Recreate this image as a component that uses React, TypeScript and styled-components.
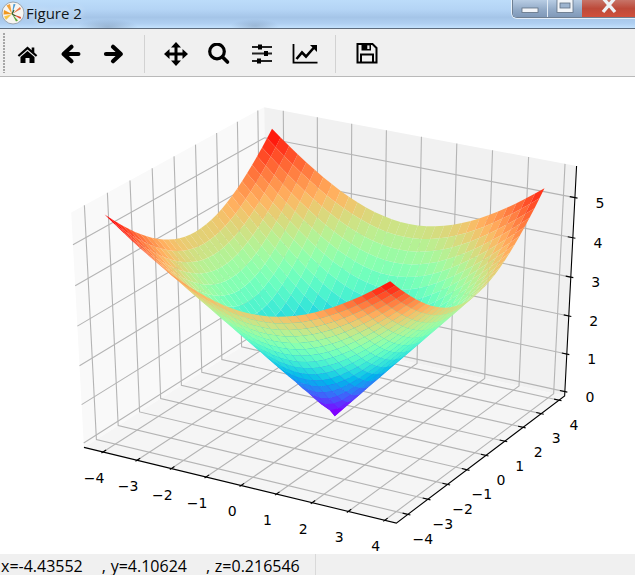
import styled, { createGlobalStyle } from "styled-components";

const GlobalStyle = createGlobalStyle`
  html, body {
    margin: 0;
    padding: 0;
    background: #fff;
  }
`;

const Window = styled.div`
  width: 635px;
  height: 575px;
  display: flex;
  flex-direction: column;
  overflow: hidden;
  font-family: "Open Sans", "Liberation Sans", sans-serif;
`;

const TitleBar = styled.div`
  height: 28px;
  flex: none;
  display: flex;
  align-items: flex-start;
  justify-content: space-between;
  background:
    radial-gradient(ellipse 30px 8px at 108px 27px, rgba(110, 135, 165, 0.45), transparent),
    radial-gradient(ellipse 24px 7px at 255px 26px, rgba(110, 135, 165, 0.4), transparent),
    linear-gradient(#bcdcfa 0%, #b4d4f5 35%, #a5c5e8 62%, #b0d0f2 85%, #c4e2fd 100%);
`;

const TitleLeft = styled.div`
  display: flex;
  align-items: center;
  gap: 1px;
  height: 25px;
  padding-left: 1px;
`;

const TitleText = styled.span`
  font-size: 15px;
  color: #101820;
  text-shadow: 0 0 6px rgba(255, 255, 255, 0.9);
`;

const WindowButtons = styled.div`
  display: flex;
  height: 17px;
  border: 1px solid #6e7f92;
  border-top: none;
  border-right: none;
  border-radius: 0 0 0 5px;
  overflow: hidden;
  box-shadow: 0 0 0 1px rgba(255, 255, 255, 0.7);
`;

const WinButton = styled.div<{ $wide?: boolean; $red?: boolean }>`
  width: ${(p) => (p.$wide ? 53 : 34)}px;
  display: flex;
  align-items: flex-start;
  justify-content: center;
  border-left: ${(p) => (p.$red ? "none" : "1px solid #e4edf6")};
  background: ${(p) =>
    p.$red
      ? "linear-gradient(#c77468, #bd4a3a 50%, #d0503c)"
      : "linear-gradient(#b8cde4, #93abc8 55%, #7f98b8)"};
  &:first-child {
    border-left: none;
  }
`;

const Toolbar = styled.div`
  height: 47px;
  flex: none;
  display: flex;
  align-items: center;
  background: #f0f0f0;
  border-top: 1px solid #5d6b7c;
  border-bottom: 1px solid #b9b9b9;
`;

const Grip = styled.div`
  width: 3px;
  height: 40px;
  margin-left: 3px;
  background-image: radial-gradient(circle at 1px 1px, #a6a6a6 1px, transparent 1px);
  background-size: 3px 3px;
`;

const ToolButton = styled.div`
  width: 43px;
  height: 100%;
  box-sizing: border-box;
  padding-top: 5px;
  display: flex;
  align-items: center;
  justify-content: center;
  flex: none;
`;

const Separator = styled.div`
  width: 1px;
  height: 38px;
  margin: 2px 9px 0;
  background: #d2d2d2;
  flex: none;
`;

const Canvas = styled.div`
  flex: 1;
  min-height: 0;
  background: #fff;
`;

const Plot = styled.svg`
  display: block;
`;

const TickLabel = styled.text`
  font-family: "DejaVu Sans", sans-serif;
  font-size: 14px;
  fill: #000;
  text-anchor: middle;
  dominant-baseline: central;
`;

const StatusBar = styled.div`
  height: 21px;
  flex: none;
  display: flex;
  background: #f0f0f0;
`;

const StatusText = styled.div`
  width: 316px;
  box-sizing: border-box;
  padding: 4px 0 0 1px;
  font-size: 16px;
  line-height: 17px;
  word-spacing: 0.6px;
  color: #000;
  white-space: pre;
  border-right: 1px solid #d9d9d9;
`;

// proyeccion igual a mplot3d: elev 30, azim -60, dist 10
const n = [0.433013, -0.75, 0.5];
const u = [0.866025, 0.5, 0];
const v = [-0.25, 0.433013, 0.866025];

const xLim = [-4.565, 4.315];
const zLim = [-0.118, 5.775];

type Pt = { x: number; y: number; w: number };

function project(dx: number, dy: number, dz: number): Pt {
  const px = (dx - xLim[0]) / (xLim[1] - xLim[0]) - 0.5;
  const py = (dy - xLim[0]) / (xLim[1] - xLim[0]) - 0.5;
  const pz = (dz - zLim[0]) / (zLim[1] - zLim[0]) - 0.5;
  const w = 10 - (n[0] * px + n[1] * py + n[2] * pz);
  const sx = (u[0] * px + u[1] * py + u[2] * pz) / w;
  const sy = (v[0] * px + v[1] * py + v[2] * pz) / w;
  return { x: 328 + 3606 * sx, y: 308 - 2682 * sy, w };
}

const pts = (list: Pt[]) => list.map((p) => `${p.x.toFixed(2)},${p.y.toFixed(2)}`).join(" ");

// mapa de color "rainbow"
function rainbow(t: number) {
  const r = Math.min(1, Math.abs(2 * t - 0.5));
  const g = Math.sin(Math.PI * t);
  const b = Math.cos((Math.PI * t) / 2);
  return `rgb(${Math.round(r * 255)},${Math.round(g * 255)},${Math.round(b * 255)})`;
}

function buildSurface() {
  const step = 0.25;
  const count = 32;
  const faces: { points: string; depth: number; avg: number }[] = [];
  const height = (a: number, b: number) => Math.sqrt(a * a + b * b);
  for (let i = 0; i < count - 1; i++) {
    for (let j = 0; j < count - 1; j++) {
      const x0 = -4 + i * step;
      const x1 = x0 + step;
      const y0 = -4 + j * step;
      const y1 = y0 + step;
      const zs = [height(x0, y0), height(x1, y0), height(x1, y1), height(x0, y1)];
      const corners = [
        project(x0, y0, zs[0]),
        project(x1, y0, zs[1]),
        project(x1, y1, zs[2]),
        project(x0, y1, zs[3]),
      ];
      faces.push({
        points: pts(corners),
        depth: corners.reduce((s, c) => s + c.w, 0) / 4,
        avg: zs.reduce((s, z) => s + z, 0) / 4,
      });
    }
  }
  const min = Math.min(...faces.map((f) => f.avg));
  const max = Math.max(...faces.map((f) => f.avg));
  return faces
    .sort((a, b) => b.depth - a.depth)
    .map((f) => ({ points: f.points, fill: rainbow((f.avg - min) / (max - min)) }));
}

const surface = buildSurface();
const ticks = [-4, -3, -2, -1, 0, 1, 2, 3, 4];
const zTicks = [0, 1, 2, 3, 4, 5];
const [xa, xb] = xLim;
const [za, zb] = zLim;
const span = xb - xa;
const tickOut = span * 0.008;
const tickIn = span * 0.016;
const label = (t: number) => (t < 0 ? `\u2212${-t}` : `${t}`);
const grid = "#b4b4b4";

function Axes() {
  return (
    <Plot width="635" height="477" viewBox="0 77 635 477">
      <polygon points={pts([project(xa, xa, za), project(xa, xb, za), project(xa, xb, zb), project(xa, xa, zb)])} fill="#f9f9f9" />
      <polygon points={pts([project(xa, xb, za), project(xb, xb, za), project(xb, xb, zb), project(xa, xb, zb)])} fill="#f1f1f1" />
      <polygon points={pts([project(xa, xa, za), project(xb, xa, za), project(xb, xb, za), project(xa, xb, za)])} fill="#f5f5f5" />

      <g stroke={grid} strokeWidth="1.1" fill="none">
        {ticks.map((t) => (
          <g key={t}>
            <polyline points={pts([project(t, xa, za), project(t, xb, za), project(t, xb, zb)])} />
            <polyline points={pts([project(xb, t, za), project(xa, t, za), project(xa, t, zb)])} />
          </g>
        ))}
        {zTicks.map((t) => (
          <polyline key={t} points={pts([project(xa, xa, t), project(xa, xb, t), project(xb, xb, t)])} />
        ))}
      </g>

      <g stroke="#000" strokeWidth="1.1" fill="none">
        <polyline points={pts([project(xa, xa, za), project(xb, xa, za), project(xb, xb, za), project(xb, xb, zb)])} />
        {ticks.map((t) => (
          <g key={t}>
            <line
              x1={project(t, xa - tickOut, za).x}
              y1={project(t, xa - tickOut, za).y}
              x2={project(t, xa + tickIn, za).x}
              y2={project(t, xa + tickIn, za).y}
            />
            <line
              x1={project(xb + tickOut, t, za).x}
              y1={project(xb + tickOut, t, za).y}
              x2={project(xb - tickIn, t, za).x}
              y2={project(xb - tickIn, t, za).y}
            />
          </g>
        ))}
        {zTicks.map((t) => (
          <line
            key={t}
            x1={project(xb + tickOut, xb, t).x}
            y1={project(xb + tickOut, xb, t).y}
            x2={project(xb - tickIn, xb, t).x}
            y2={project(xb - tickIn, xb, t).y}
          />
        ))}
      </g>

      {surface.map((f, i) => (
        <polygon key={i} points={f.points} fill={f.fill} />
      ))}

      {ticks.map((t) => {
        const p = project(t, xa, za);
        return (
          <TickLabel key={t} x={p.x - 9} y={p.y + 26}>
            {label(t)}
          </TickLabel>
        );
      })}
      {ticks.map((t) => {
        const p = project(xb, t, za);
        return (
          <TickLabel key={t} x={p.x + 15} y={p.y + 24.5}>
            {label(t)}
          </TickLabel>
        );
      })}
      {zTicks.map((t) => {
        const p = project(xb, xb, t);
        return (
          <TickLabel key={t} x={p.x + 25} y={p.y + 5}>
            {t}
          </TickLabel>
        );
      })}
    </Plot>
  );
}

function LogoIcon() {
  return (
    <svg width="24" height="24" viewBox="0 0 24 24">
      <circle cx="12" cy="12" r="11" fill="#f7f5f0" stroke="#9aa5b0" strokeWidth="1" />
      <path d="M11 13 L3 9 L2.5 13.5 Z" fill="#f0981f" />
      <path d="M11 13 L3 15.5 L5 19 Z" fill="#f7c648" />
      <path d="M11 13 L5.5 4.5 L9 3 Z" fill="#f2a23a" />
      <path d="M11 13 L12.5 3 L14.5 3.3 Z" fill="#4a9ad4" />
      <path d="M11 13 L19 6 L20 8 Z" fill="#e8784a" />
      <path d="M11 13 L15 20.5 L17 19.5 Z" fill="#5da63a" />
      <path d="M11 13 L20 16 L19.5 18 Z" fill="#d8482e" />
      <path d="M11 13 L13 9 M11 13 L14.5 15" stroke="#2d5f2a" strokeWidth="1.2" />
    </svg>
  );
}

const HomeIcon = () => (
  <svg width="24" height="24" viewBox="0.5 0 24 24">
    <path d="M12 3.6 L2.2 12.2 L3.6 13.8 L12 6.6 L20.4 13.8 L21.8 12.2 L18.8 9.6 V4.4 H16.2 V7.3 Z" fill="#000" />
    <path d="M12 8 L5 14 V20 H10 V15 H14 V20 H19 V14 Z" fill="#000" />
  </svg>
);

const LeftIcon = () => (
  <svg width="24" height="24" viewBox="0 0 24 24">
    <path d="M12.5 3.8 L4.6 11 L12.5 18.2 M5.5 11 H19.4" fill="none" stroke="#000" strokeWidth="4.2" strokeLinejoin="round" strokeLinecap="round" />
  </svg>
);

const RightIcon = () => (
  <svg width="24" height="24" viewBox="0 0 24 24">
    <path d="M11 3.8 L18.8 11 L11 18.2 M18 11 H4" fill="none" stroke="#000" strokeWidth="4.2" strokeLinejoin="round" strokeLinecap="round" />
  </svg>
);

const MoveIcon = () => (
  <svg width="26" height="26" viewBox="0 1 26 26">
    <path d="M13 4 V22 M4 13 H22" stroke="#000" strokeWidth="3" fill="none" />
    <path d="M13 1 L18 6.5 H8 Z M13 25 L18 19.5 H8 Z M1 13 L6.5 8 V18 Z M25 13 L19.5 8 V18 Z" fill="#000" />
  </svg>
);

const SearchIcon = () => (
  <svg width="24" height="24" viewBox="0 1 24 24">
    <circle cx="10" cy="9.5" r="7.3" fill="none" stroke="#000" strokeWidth="3.2" />
    <path d="M15.5 15 L20.5 20" stroke="#000" strokeWidth="3.6" strokeLinecap="round" />
  </svg>
);

const SlidersIcon = () => (
  <svg width="24" height="24" viewBox="0 0 24 24">
    <path d="M2 4 H22 M2 10.5 H22 M2 18 H22" stroke="#222" strokeWidth="1.8" />
    <path d="M8 1.6 H12 V6.4 H8 Z M14 8 H18 V13 H14 Z M7 15.6 H11 V20.4 H7 Z" fill="#000" />
  </svg>
);

const ChartIcon = () => (
  <svg width="26" height="24" viewBox="0 0 26 24">
    <path d="M1.5 1 V19.7 H25.5" fill="none" stroke="#000" strokeWidth="1.8" />
    <path d="M4.5 16 L10 9.5 L14 13.5 L22 4.5" fill="none" stroke="#000" strokeWidth="2.6" />
    <path d="M18 2 H25 V9 Z" fill="#000" />
  </svg>
);

const SaveIcon = () => (
  <svg width="24" height="24" viewBox="0.5 2 24 24">
    <path d="M3 3 H18 L22 7 V21.5 H3 Z" fill="none" stroke="#000" strokeWidth="2" />
    <path d="M7 3 H16.5 V9.5 H7 Z" fill="#000" />
    <path d="M12.8 4.4 H15 V8 H12.8 Z" fill="#f0f0f0" />
    <path d="M6.5 21 V13.5 H18.5 V21" fill="none" stroke="#000" strokeWidth="2" />
  </svg>
);

const MinGlyph = () => (
  <svg width="18" height="16" viewBox="0 0 18 16">
    <rect x="1" y="8" width="16" height="4.5" fill="#f2f5f9" stroke="#5f6f82" strokeWidth="0.8" />
  </svg>
);

const MaxGlyph = () => (
  <svg width="18" height="14" viewBox="0 0 18 14">
    <rect x="1" y="-1" width="16" height="13.5" fill="#f2f5f9" stroke="#5f6f82" strokeWidth="0.8" />
    <rect x="4" y="3" width="10" height="5" fill="#9db4cf" stroke="#5f6f82" strokeWidth="0.8" />
  </svg>
);

const CloseGlyph = () => (
  <svg width="18" height="14" viewBox="0 0 18 14">
    <path d="M3 -2 L15 12 M15 -2 L3 12" stroke="#eef2f6" strokeWidth="3.4" />
  </svg>
);

export default function App() {
  return (
    <Window>
      <GlobalStyle />
      <TitleBar>
        <TitleLeft>
          <LogoIcon />
          <TitleText>Figure 2</TitleText>
        </TitleLeft>
        <WindowButtons>
          <WinButton>
            <MinGlyph />
          </WinButton>
          <WinButton>
            <MaxGlyph />
          </WinButton>
          <WinButton $wide $red>
            <CloseGlyph />
          </WinButton>
        </WindowButtons>
      </TitleBar>
      <Toolbar>
        <Grip />
        <ToolButton><HomeIcon /></ToolButton>
        <ToolButton><LeftIcon /></ToolButton>
        <ToolButton><RightIcon /></ToolButton>
        <Separator />
        <ToolButton><MoveIcon /></ToolButton>
        <ToolButton><SearchIcon /></ToolButton>
        <ToolButton><SlidersIcon /></ToolButton>
        <ToolButton><ChartIcon /></ToolButton>
        <Separator />
        <ToolButton><SaveIcon /></ToolButton>
      </Toolbar>
      <Canvas>
        <Axes />
      </Canvas>
      <StatusBar>
        <StatusText>{"x=-4.43552    , y=4.10624    , z=0.216546"}</StatusText>
      </StatusBar>
    </Window>
  );
}
